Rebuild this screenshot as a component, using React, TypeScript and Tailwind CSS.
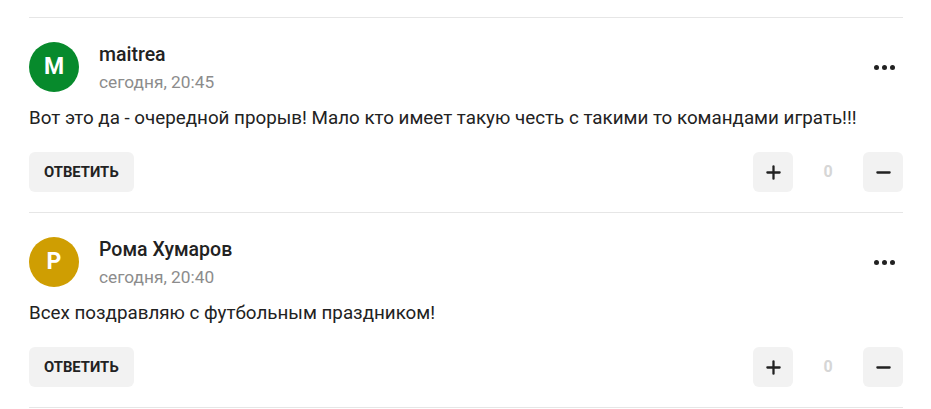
import { Plus, Minus } from "lucide-react"

type Comment = {
  initial: string
  color: string
  name: string
  time: string
  text: string
}

const comments: Comment[] = [
  {
    initial: "M",
    color: "bg-[#078a2c]",
    name: "maitrea",
    time: "сегодня, 20:45",
    text: "Вот это да - очередной прорыв! Мало кто имеет такую честь с такими то командами играть!!!",
  },
  {
    initial: "P",
    color: "bg-[#cf9e02]",
    name: "Рома Хумаров",
    time: "сегодня, 20:40",
    text: "Всех поздравляю с футбольным праздником!",
  },
]

function CommentItem({ c }: { c: Comment }) {
  return (
    <div className="border-b border-[#e6e6e6] pt-6 pb-5">
      <div className="flex items-center">
        <div
          className={`flex h-[50px] w-[50px] items-center justify-center rounded-full text-[23px] font-bold text-white ${c.color}`}
        >
          {c.initial}
        </div>
        <div className="ml-5 flex flex-col">
          <span className="text-[19.5px] leading-[24px] font-medium text-[#222]">{c.name}</span>
          <span className="mt-[5px] text-[17.3px] leading-[20px] text-[#8c8c8c]">{c.time}</span>
        </div>
        <button className="ml-auto mr-2 flex h-6 items-center gap-[3px]">
          <span className="h-[5px] w-[5px] rounded-full bg-[#222]" />
          <span className="h-[5px] w-[5px] rounded-full bg-[#222]" />
          <span className="h-[5px] w-[5px] rounded-full bg-[#222]" />
        </button>
      </div>
      <p className="mt-[14px] text-[18.8px] leading-[24px] text-[#222]">{c.text}</p>
      <div className="mt-[22px] flex items-center">
        <button className="h-10 rounded-md bg-[#f2f2f2] px-[15px] text-[14.8px] font-bold text-[#222]">
          ОТВЕТИТЬ
        </button>
        <div className="ml-auto flex items-center">
          <button className="flex h-10 w-10 items-center justify-center rounded-md bg-[#f2f2f2] text-[#222]">
            <Plus size={21} strokeWidth={2.6} />
          </button>
          <span className="w-[70px] text-center text-[16px] font-bold text-[#d6d6d6]">0</span>
          <button className="flex h-10 w-10 items-center justify-center rounded-md bg-[#f2f2f2] text-[#222]">
            <Minus size={21} strokeWidth={2.6} />
          </button>
        </div>
      </div>
    </div>
  )
}

export default function App() {
  return (
    <div className="min-h-screen bg-white pt-[17px] font-['Roboto',sans-serif]">
      <div className="ml-[29px] w-[874px] border-t border-[#e6e6e6]">
        {comments.map((c, i) => (
          <CommentItem key={i} c={c} />
        ))}
      </div>
    </div>
  )
}
